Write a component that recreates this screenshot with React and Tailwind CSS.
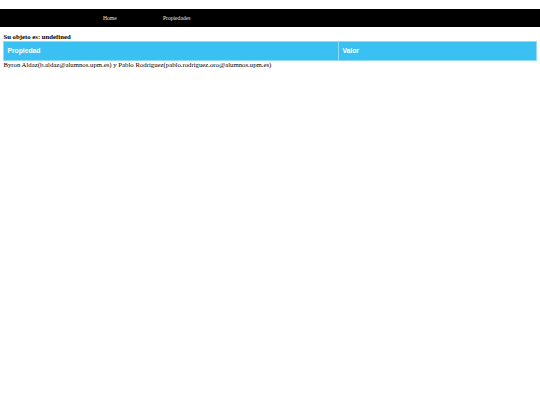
export default function App() {
  return (
    <div className="min-h-[405px] bg-white font-['Liberation_Serif',serif] text-[6.75px] text-black">
      <div className="h-[9px]" />
      <nav className="flex h-[18px] items-center bg-black pl-[103px] text-[5.6px] text-[#e8e8e8]">
        <a className="w-[60px]">Home</a>
        <a>Propiedades</a>
      </nav>
      <div className="px-[3.4px] pt-[6px]">
        <p className="text-[6.75px] font-bold leading-[8px]">Su objeto es: undefined</p>
        <table className="w-full border-collapse font-['Liberation_Sans',sans-serif] text-[6.75px]">
          <thead>
            <tr className="bg-[#3bc0f2] text-white">
              <th className="h-[19px] w-[335px] border-[0.5px] border-[#8fdaf7] px-[3px] text-left font-bold">
                Propiedad
              </th>
              <th className="h-[19px] border-[0.5px] border-[#8fdaf7] px-[3px] text-left font-bold">
                Valor
              </th>
            </tr>
          </thead>
        </table>
        <p className="leading-[8px]">
          Byron Aldaz(b.aldaz@alumnos.upm.es) y Pablo Rodriguez(pablo.rodriguez.oro@alumnos.upm.es)
        </p>
      </div>
    </div>
  );
}
